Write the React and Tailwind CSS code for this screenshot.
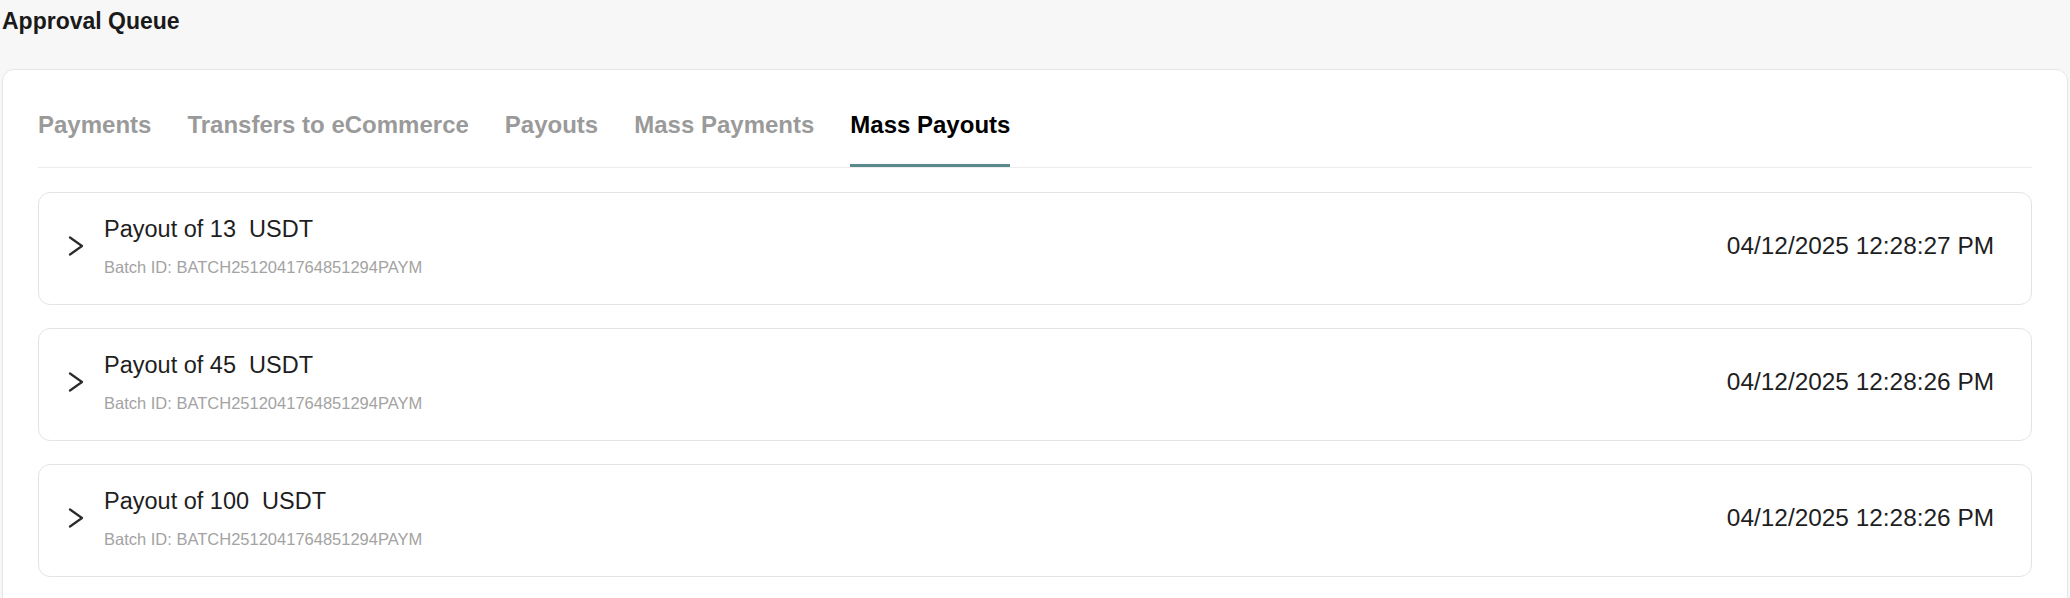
import { useState } from 'react';

const tabs = ['Payments', 'Transfers to eCommerce', 'Payouts', 'Mass Payments', 'Mass Payouts'];

const payouts = [
  { id: 1, amount: '13', batch: 'BATCH2512041764851294PAYM', date: '04/12/2025 12:28:27 PM' },
  { id: 2, amount: '45', batch: 'BATCH2512041764851294PAYM', date: '04/12/2025 12:28:26 PM' },
  { id: 3, amount: '100', batch: 'BATCH2512041764851294PAYM', date: '04/12/2025 12:28:26 PM' },
];

function Chevron() {
  return (
    <svg width="16" height="20" viewBox="0 0 16 20" fill="none" className="shrink-0">
      <polyline points="2,1.5 14,10 2,18.5" stroke="#2b2b2b" strokeWidth="2.2" strokeLinecap="round" strokeLinejoin="round" />
    </svg>
  );
}

export default function App() {
  const [active, setActive] = useState('Mass Payouts');

  return (
    <div className="min-h-screen bg-[#f7f7f7] px-[2px] pt-[7px] font-['Liberation_Sans',Arial,sans-serif]">
      <h1 className="text-[23px] leading-[28px] font-bold text-[#1a1a1a]">Approval Queue</h1>

      <div className="mt-[34px] bg-white border border-[#e4e6e6] rounded-[12px] px-[35px] pt-[41px] pb-[40px]">
        <div className="flex gap-[36px] border-b border-[#ededed]">
          {tabs.map(tab => (
            <button
              key={tab}
              onClick={() => setActive(tab)}
              className={
                'text-[24px] leading-[28px] font-bold pb-[25px] border-b-[3px] ' +
                (tab === active ? 'text-black border-[#5b8a8e]' : 'text-[#9a9a9a] border-transparent')
              }
            >
              {tab}
            </button>
          ))}
        </div>

        <ul className="mt-[24px] flex flex-col gap-[23px]">
          {payouts.map(p => (
            <li
              key={p.id}
              className="flex items-center border border-[#e2e4e4] rounded-[12px] pl-[29px] pr-[37px] pt-[22px] pb-[27px]"
            >
              <Chevron />
              <div className="ml-[20px] flex-1">
                <div className="text-[23.5px] leading-[28px] text-[#1e1e1e] whitespace-pre">
                  Payout of {p.amount}{'  '}USDT
                </div>
                <div className="mt-[14px] text-[16.5px] leading-[20px] text-[#a3a3a3]">Batch ID: {p.batch}</div>
              </div>
              <span className="text-[24.4px] leading-[28px] text-[#1e1e1e]">{p.date}</span>
            </li>
          ))}
        </ul>
      </div>
    </div>
  );
}
